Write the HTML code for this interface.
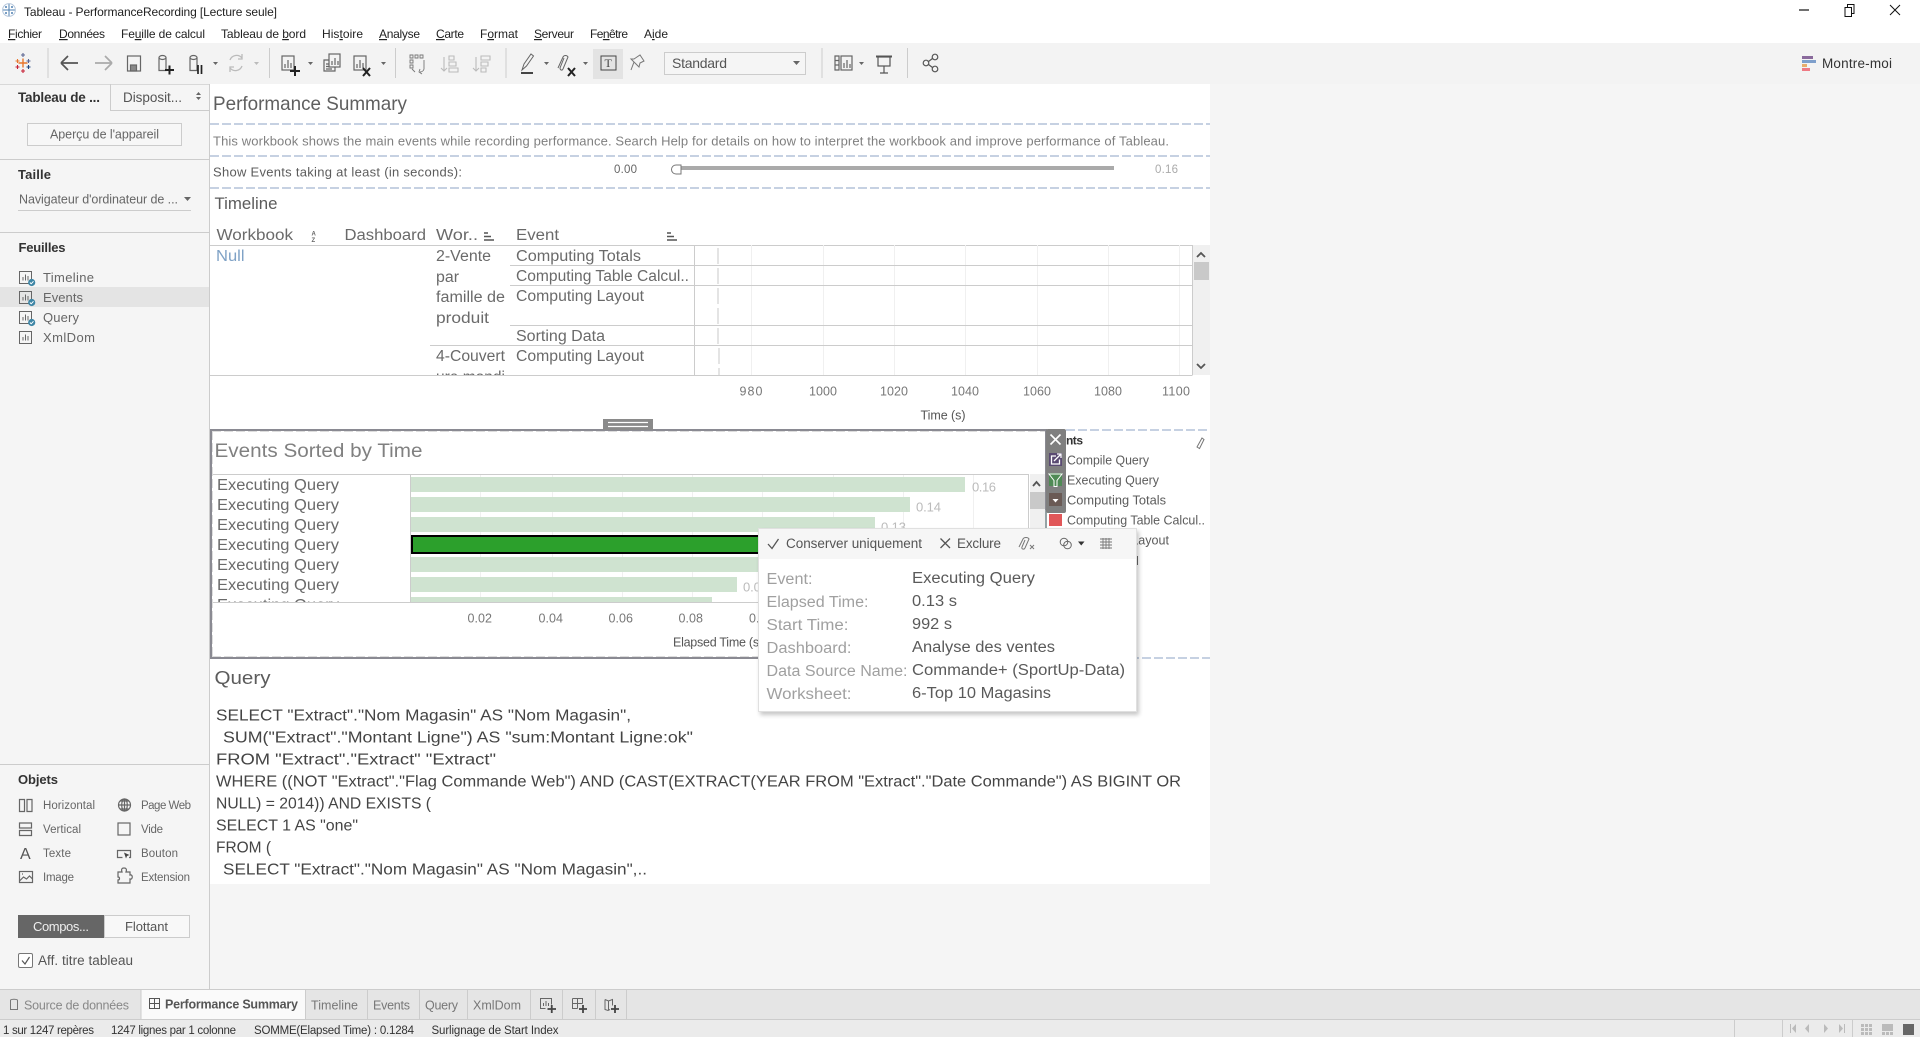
<!DOCTYPE html>
<html lang="fr">
<head>
<meta charset="utf-8">
<title>Tableau - PerformanceRecording [Lecture seule]</title>
<style>
html,body{margin:0;padding:0;width:1920px;height:1037px;overflow:hidden;background:#fff}
svg{display:block;position:absolute;left:0;top:0}
text{font-family:"Liberation Sans",sans-serif;fill:#666;font-size:13px;white-space:pre}
.m{fill:#222;font-size:12px}
.b{font-weight:bold;fill:#333}
.s{font-size:11.5px;fill:#666}
.st{font-size:11.5px;fill:#333}
.r{font-size:15.5px;fill:#6a6a6a}
.ax{font-size:12.5px;fill:#777}
.lb{fill:#bbb;font-size:13px}
.q{font-size:15.5px;fill:#444}
.tk{font-size:15.5px;fill:#a0a0a0}
.tv{font-size:15.5px;fill:#5a5a5a}
.ic{fill:none;stroke:#666;stroke-width:1.2}
.lg{font-size:12.5px;fill:#5c5c5c}
</style>
</head>
<body>
<svg width="1920" height="1037" viewBox="0 0 1920 1037" xmlns="http://www.w3.org/2000/svg">
<defs>
<g id="sheet"><rect x=".5" y=".5" width="12" height="12" fill="none" stroke="#666"/><path d="M4 9.5V6M6.5 9.5V3.5M9 9.5V5" stroke="#666" fill="none"/></g>
<g id="badge"><circle r="3.6" fill="#3d85a5"/><path d="M-1.8 0L-.5 1.3L1.8-1.2" stroke="#fff" fill="none"/></g>
<clipPath id="ctl"><rect x="210" y="245" width="983" height="130"/></clipPath>
<clipPath id="cev"><rect x="212" y="474" width="817" height="128"/></clipPath>
</defs>

<!-- base -->
<rect width="1920" height="1037" fill="#f5f5f5"/>
<rect width="1920" height="43" fill="#fff"/>
<rect y="43" width="1920" height="41" fill="#f3f3f3"/>

<!-- title bar -->
<g transform="translate(9,10)" fill="none" stroke="#4d7fb0" stroke-width="1"><path d="M0-6V6M-6 0H6M-3-4V-2M3-4V-2M-3 2V4M3 2V4M-4-3H-2M2-3H4M-4 3H-2M2 3H4"/><circle r="6.4" stroke="#b7c8dc"/></g>
<text x="24" y="16" textLength="253" style="font-size:12px;fill:#222">Tableau - PerformanceRecording [Lecture seule]</text>
<path d="M1799 10H1809" stroke="#111" stroke-width="1.2"/>
<path d="M1845 7.500h6.500v9h-6.500zM1847.500 7.500v-3h6.500v9h-2" fill="none" stroke="#111"/>
<path d="M1890 5L1900 15M1900 5L1890 15" stroke="#111"/>

<!-- menu -->
<text class="m" x="8" y="38" textLength="34"><tspan text-decoration="underline">F</tspan>ichier</text>
<text class="m" x="59" y="38" textLength="46"><tspan text-decoration="underline">D</tspan>onnées</text>
<text class="m" x="121" y="38" textLength="84">Fe<tspan text-decoration="underline">u</tspan>ille de calcul</text>
<text class="m" x="221" y="38" textLength="85">Tableau de <tspan text-decoration="underline">b</tspan>ord</text>
<text class="m" x="322" y="38" textLength="41">His<tspan text-decoration="underline">t</tspan>oire</text>
<text class="m" x="379" y="38" textLength="41"><tspan text-decoration="underline">A</tspan>nalyse</text>
<text class="m" x="436" y="38" textLength="28"><tspan text-decoration="underline">C</tspan>arte</text>
<text class="m" x="480" y="38" textLength="38">F<tspan text-decoration="underline">o</tspan>rmat</text>
<text class="m" x="534" y="38" textLength="40"><tspan text-decoration="underline">S</tspan>erveur</text>
<text class="m" x="590" y="38" textLength="38">Fe<tspan text-decoration="underline">n</tspan>être</text>
<text class="m" x="644" y="38" textLength="24">A<tspan text-decoration="underline">i</tspan>de</text>

<!-- toolbar -->
<g stroke-width="1.100" fill="none">
<path d="M17.500 59v4M15.500 61h4" stroke="#e8762c"/><path d="M28.500 59v4M26.500 61h4" stroke="#5b6591"/>
<path d="M23 53v4M21 55h4" stroke="#5b6591"/><path d="M23 69v4M21 71h4" stroke="#c72035"/>
<path d="M17.500 65v4M15.500 67h4" stroke="#c72035"/><path d="M28.500 65v4M26.500 67h4" stroke="#1f447e"/>
<path d="M23 58.500v9M18.500 63h9" stroke="#e8762c" stroke-width="1.400"/>
</g>
<g stroke="#ccc"><path d="M48 48V78M269.500 48V78M395.500 48V78M506 48V78M822 48V78M907.500 48V78"/></g>
<path d="M61 63H78M61 63L68 56M61 63L68 70" stroke="#555" stroke-width="1.700" fill="none"/>
<path d="M95 63H112M112 63L105 56M112 63L105 70" stroke="#aaa" stroke-width="1.700" fill="none"/>
<g class="ic"><rect x="127.500" y="56" width="13" height="15"/><rect x="130.500" y="65" width="6" height="6" fill="#888"/></g>
<g class="ic"><path d="M159 57.500a3.500 2 0 0 1 7 0v13h-7z"/><path d="M159 57.500a3.500 2 0 0 0 7 0"/></g>
<path d="M165 70H174M169.500 65.500V74.500" stroke="#222" stroke-width="2"/>
<g class="ic"><path d="M190 57.500a3.500 2 0 0 1 7 0v13h-7z"/><path d="M190 57.500a3.500 2 0 0 0 7 0"/></g>
<path d="M198 65v9M201.500 65v9" stroke="#222" stroke-width="1.700"/>
<path d="M213 62h5l-2.500 3z" fill="#666"/>
<path d="M230 60a7 7 0 0 1 12-2M242 66a7 7 0 0 1-12 2M242 54v5h-4M230 72v-5h4" stroke="#bbb" stroke-width="1.300" fill="none"/>
<path d="M254 62h5l-2.500 3z" fill="#bbb"/>
<g class="ic"><rect x="282" y="56" width="12" height="14"/><path d="M285 68v-4M288 68v-8M291 68v-5"/></g>
<path d="M290 71H300M295 66V76" stroke="#222" stroke-width="2"/>
<path d="M308 62h5l-2.500 3z" fill="#666"/>
<g class="ic"><rect x="329" y="54" width="11" height="13" fill="#f3f3f3"/><path d="M332 65v-4M335 65v-7M338 65v-4"/><path d="M329 60h-5v11h11v-4M326 64h3M326 66.500h3M326 69h6"/></g>
<g class="ic"><rect x="354" y="56" width="12" height="14"/><path d="M357 68v-4M360 68v-8M363 68v-5"/></g>
<path d="M363 68L370 76M370 68L363 76" stroke="#222" stroke-width="2"/>
<path d="M381 62h5l-2.500 3z" fill="#666"/>
<g fill="none" stroke="#777" stroke-width=".9"><path d="M410 55h3v3h-3zM415 55h3v3h-3zM420 55h3v3h-3zM410 60h3v3h-3zM410 65h3v3h-3zM424 60v9a4 4 0 0 1-4 3M420 69l-1 3 3 2M415 72l-3-3"/></g>
<g fill="none" stroke="#bbb" stroke-width="1.100"><path d="M444 57v14M441 68l3 3 3-3M449 56h5v4h-5zM449 62h7v4h-7zM449 68h9v4h-9z"/></g>
<g fill="none" stroke="#bbb" stroke-width="1.100"><path d="M476 57v14M473 68l3 3 3-3M481 56h9v4h-9zM481 62h7v4h-7zM481 68h5v4h-5z"/></g>
<path d="M522 70l2-6 7-10 2.500 2-7 10z" fill="none" stroke="#666"/><path d="M521 73H533" stroke="#444" stroke-width="2"/>
<path d="M544 62h5l-2.500 3z" fill="#666"/>
<path d="M558 68l5-11c1-2 4-2 5 0l-5 12c-1 2-3 1-3-1l4-10" fill="none" stroke="#666"/>
<path d="M568 68L575 76M575 68L568 76" stroke="#222" stroke-width="2"/>
<path d="M583 62h5l-2.500 3z" fill="#666"/>
<rect x="593" y="49" width="30" height="30" fill="#e3e3e3"/>
<rect x="601" y="56" width="15" height="14" fill="none" stroke="#444"/>
<text x="604.500" y="67" style="font-family:'Liberation Serif',serif;font-size:12px;fill:#444">T</text>
<path d="M634 59l6-4 4 6-4 2-1 4-5-5-3 8 3-8-3-3z" fill="none" stroke="#777"/>
<rect x="664.500" y="52.500" width="141" height="22" fill="#f5f5f5" stroke="#ccc"/>
<text x="672" y="68" textLength="55" style="font-size:14px;fill:#555">Standard</text>
<path d="M793 61h7l-3.500 4z" fill="#666"/>
<g class="ic"><path d="M835 56h4v14h-4zM835 60.500h4M835 65h4"/><rect x="841" y="56" width="11" height="14"/><path d="M844 68v-5M847 68v-8M850 68v-4"/></g>
<path d="M859 62h5l-2.500 3z" fill="#666"/>
<g fill="none" stroke="#555" stroke-width="1.200"><path d="M876 56.500H892" stroke-width="2"/><rect x="878" y="57" width="12" height="9"/><path d="M884 66V73M880 73H888"/></g>
<g fill="none" stroke="#555" stroke-width="1.200"><circle cx="926" cy="63" r="2.800"/><circle cx="935" cy="57" r="2.800"/><circle cx="935" cy="69" r="2.800"/><path d="M928.500 61.500L932.500 58.500M928.500 64.500L932.500 67.500"/></g>
<!-- montre-moi -->
<rect x="1802" y="56" width="11" height="3" fill="#8a6a9c"/><rect x="1802" y="60" width="14" height="3" fill="#7e9fcb"/><rect x="1802" y="64" width="5" height="3" fill="#e8ad6c"/><rect x="1802" y="68" width="8" height="3" fill="#ef7a84"/>
<text x="1822" y="68" textLength="70" style="font-size:13.500px;fill:#333">Montre-moi</text>

<!-- left panel -->
<rect x="0" y="84" width="209" height="905" fill="#f5f5f5"/>
<rect x="209" y="84" width="1" height="905" fill="#ccc"/>
<path d="M0 84.500H209" stroke="#d8d8d8"/>
<path d="M110.500 84V110.500H209" stroke="#ccc" fill="none"/>
<text class="b" x="18" y="102" textLength="82" style="font-size:13.500px">Tableau de ...</text>
<text x="123" y="102" textLength="59" style="font-size:13.500px;fill:#555">Disposit...</text>
<path d="M196 95L198.500 92L201 95zM196 97L198.500 100L201 97z" fill="#666"/>
<rect x="27.500" y="123.500" width="154" height="22" fill="#f7f7f7" stroke="#ccc"/>
<text x="50" y="138.500" textLength="109" style="font-size:12.500px;fill:#666">Aperçu de l'appareil</text>
<rect x="0" y="159" width="209" height="1" fill="#ccc"/>
<text class="b" x="18" y="179" textLength="33">Taille</text>
<text x="19" y="203.500" textLength="159" style="font-size:12.500px;fill:#666">Navigateur d'ordinateur de ...</text>
<path d="M184 197h7l-3.500 4z" fill="#666"/>
<rect x="18" y="210" width="173" height="1" fill="#ccc"/>
<rect x="0" y="232" width="209" height="1" fill="#ccc"/>
<text class="b" x="18.500" y="252" textLength="47">Feuilles</text>
<rect x="0" y="287" width="209" height="20" fill="#e4e4e4"/>
<use href="#sheet" x="19" y="271"/><use href="#badge" x="31.700" y="282.500"/>
<use href="#sheet" x="19" y="291"/><use href="#badge" x="31.700" y="302.500"/>
<use href="#sheet" x="19" y="311"/><use href="#badge" x="31.700" y="322.500"/>
<use href="#sheet" x="19" y="331"/>
<text x="43" y="282" textLength="51">Timeline</text>
<text x="43" y="302" textLength="40">Events</text>
<text x="43" y="322" textLength="36">Query</text>
<text x="43" y="342" textLength="52">XmlDom</text>
<rect x="0" y="764" width="209" height="1" fill="#ccc"/>
<text class="b" x="18" y="784" textLength="40">Objets</text>
<text class="s" x="43" y="809" textLength="52">Horizontal</text>
<text class="s" x="43" y="833" textLength="38">Vertical</text>
<text class="s" x="43" y="857" textLength="28">Texte</text>
<text class="s" x="43" y="881" textLength="31">Image</text>
<text class="s" x="141" y="809" textLength="50">Page Web</text>
<text class="s" x="141" y="833" textLength="22">Vide</text>
<text class="s" x="141" y="857" textLength="37">Bouton</text>
<text class="s" x="141" y="881" textLength="49">Extension</text>
<g class="ic">
<path d="M19.500 799.500h5v12h-5zM27 799.500h5v12h-5z"/>
<path d="M19.500 823h12v5h-12zM19.500 830.500h12v5h-12z"/>
<circle cx="124.500" cy="805" r="6"/><path d="M118.500 805h12M124.500 799v12M120 801h9M120 809h9"/><ellipse cx="124.500" cy="805" rx="2.800" ry="6"/>
<rect x="118" y="823" width="12" height="12"/>
<path d="M122.500 857.500h-5v-7h13v7h-1.500"/>
<rect x="19.500" y="871.500" width="13" height="11"/><path d="M19.500 881l4-4 3 2 3-3 3 3M22 874h1"/>
<path d="M118 872h4c-1-3 0-4 2-4s3 1 2 4h4v3c3-1 3 5 0 4v4h-12v-3c2 0 2-3 0-3z"/>
</g>
<path d="M124 852.500l2 6 1-2.500 2.500-1z" fill="#444"/>
<text x="20" y="859" style="font-size:16px;fill:#555">A</text>
<rect x="18" y="915" width="86" height="23" fill="#666"/>
<rect x="104.500" y="915.500" width="85" height="22" fill="#f8f8f8" stroke="#ccc"/>
<text x="33" y="931" textLength="56" style="fill:#eee">Compos...</text>
<text x="125" y="931" textLength="43" style="fill:#555">Flottant</text>
<rect x="18.500" y="953.500" width="14" height="14" rx="1.500" fill="#fff" stroke="#777"/>
<path d="M22 960.500L25 964L29.500 957" fill="none" stroke="#555" stroke-width="1.200"/>
<text x="38" y="965" textLength="95" style="font-size:13.500px;fill:#555">Aff. titre tableau</text>

<!-- dashboard -->
<rect x="210" y="84" width="1000" height="800" fill="#fff"/>
<text x="213" y="110" textLength="194" lengthAdjust="spacingAndGlyphs" style="font-size:19.500px;fill:#5f5f5f">Performance Summary</text>
<g stroke="#c6d1e2" stroke-width="2" stroke-dasharray="9 3">
<path d="M210 124H1210"/><path d="M210 156H1210"/><path d="M210 188H1210"/>
<path d="M1066 430H1210"/><path d="M1046 658H1210"/>
</g>
<text x="213" y="145.500" textLength="956" style="font-size:13px;fill:#808080">This workbook shows the main events while recording performance. Search Help for details on how to interpret the workbook and improve performance of Tableau.</text>
<text x="213" y="176.500" textLength="249" style="font-size:13px;fill:#5c5c5c">Show Events taking at least (in seconds):</text>
<text x="614" y="173" textLength="23" style="font-size:11.500px;fill:#666">0.00</text>
<rect x="678" y="166" width="436" height="4" fill="#aaa"/>
<path d="M676 165h5v9h-5a4.500 4.500 0 0 1 0-9z" fill="#fff" stroke="#777"/>
<text x="1155" y="173" textLength="23" style="font-size:11.500px;fill:#aaa">0.16</text>

<text x="214.500" y="209" textLength="63" lengthAdjust="spacingAndGlyphs" style="font-size:16.500px;fill:#5c5c5c">Timeline</text>
<text class="r" x="216.500" y="240" textLength="76.500" lengthAdjust="spacingAndGlyphs">Workbook</text>
<text class="r" x="344.500" y="240" textLength="81.500" lengthAdjust="spacingAndGlyphs">Dashboard</text>
<text class="r" x="436" y="240" textLength="42" lengthAdjust="spacingAndGlyphs">Wor..</text>
<text class="r" x="516" y="240" textLength="43" lengthAdjust="spacingAndGlyphs">Event</text>
<text x="311.500" y="235.500" style="font-size:6px;font-weight:bold;fill:#666">A</text>
<text x="311.500" y="242" style="font-size:6px;font-weight:bold;fill:#666">Z</text>
<g stroke="#555" fill="none"><path d="M484 233h4M484 236.500h7M484 240h10M667 233h4M667 236.500h7M667 240h10" stroke-width="1.500"/></g>
<path d="M210 245.500H1192.500" stroke="#ccc"/>
<g stroke="#f0f0f0"><path d="M751.500 245V375M823.500 245V375M894.500 245V375M965.500 245V375M1037.500 245V375M1108.500 245V375M1179.500 245V375"/></g>
<g stroke="#e4e4e4" stroke-width="2"><path d="M718 248V264M718 268V284M718 288V304M718 308V324M718 328V344M719 348V364M719 368V375"/></g>
<g stroke="#ccc"><path d="M510 265.500H1192M510 285.500H1192M510 325.500H1192M430 345.500H1192M694.500 245V375M1192.500 245V375M210 375.500H1192.500"/></g>
<g clip-path="url(#ctl)">
<text class="r" x="216" y="261" textLength="28.500" lengthAdjust="spacingAndGlyphs" style="fill:#7fa2c6">Null</text>
<text class="r" x="436" y="261" textLength="55" lengthAdjust="spacingAndGlyphs">2-Vente</text>
<text class="r" x="436" y="282" textLength="23" lengthAdjust="spacingAndGlyphs">par</text>
<text class="r" x="436" y="302" textLength="69" lengthAdjust="spacingAndGlyphs">famille de</text>
<text class="r" x="436" y="323" textLength="53" lengthAdjust="spacingAndGlyphs">produit</text>
<text class="r" x="436" y="361" textLength="69" lengthAdjust="spacingAndGlyphs">4-Couvert</text>
<text class="r" x="436" y="382" textLength="69" lengthAdjust="spacingAndGlyphs">ure mondi</text>
<text class="r" x="516" y="261" textLength="125" lengthAdjust="spacingAndGlyphs">Computing Totals</text>
<text class="r" x="516" y="281" textLength="173" lengthAdjust="spacingAndGlyphs">Computing Table Calcul..</text>
<text class="r" x="516" y="301" textLength="128" lengthAdjust="spacingAndGlyphs">Computing Layout</text>
<text class="r" x="516" y="341" textLength="89" lengthAdjust="spacingAndGlyphs">Sorting Data</text>
<text class="r" x="516" y="361" textLength="128" lengthAdjust="spacingAndGlyphs">Computing Layout</text>
</g>
<rect x="1193" y="245" width="17" height="130" fill="#f0f0f0"/>
<rect x="1194" y="262" width="15" height="18" fill="#c9c9c9"/>
<path d="M1197 257L1201 253L1205 257M1197 364L1201 368L1205 364" fill="none" stroke="#555" stroke-width="1.800"/>
<text class="ax" x="739.500" y="395.500" textLength="23">980</text>
<text class="ax" x="809" y="395.500" textLength="28">1000</text>
<text class="ax" x="880" y="395.500" textLength="28">1020</text>
<text class="ax" x="951" y="395.500" textLength="28">1040</text>
<text class="ax" x="1023" y="395.500" textLength="28">1060</text>
<text class="ax" x="1094" y="395.500" textLength="28">1080</text>
<text class="ax" x="1162" y="395.500" textLength="28">1100</text>
<text x="920.500" y="419.500" textLength="45" style="font-size:12.500px;fill:#555">Time (s)</text>

<!-- events sorted -->
<text x="214.500" y="457" textLength="208" lengthAdjust="spacingAndGlyphs" style="font-size:19.500px;fill:#808080">Events Sorted by Time</text>
<g stroke="#f0f0f0"><path d="M480.500 474V602M552.500 474V602M622.500 474V602M692.500 474V602M762.500 474V602M833.500 474V602M903.500 474V602M973.500 474V602"/></g>
<g clip-path="url(#cev)" fill="#cfe3d0">
<rect x="411" y="477" width="554" height="15"/>
<rect x="411" y="497" width="499" height="15"/>
<rect x="411" y="517" width="464" height="15"/>
<rect x="411" y="557" width="440" height="15"/>
<rect x="411" y="577" width="326" height="15"/>
<rect x="411" y="597" width="301" height="15"/>
<rect x="412" y="536" width="440" height="17" fill="#2ca02c" stroke="#000" stroke-width="2"/>
<text class="r" x="217" y="490" textLength="122" lengthAdjust="spacingAndGlyphs">Executing Query</text>
<text class="r" x="217" y="510" textLength="122" lengthAdjust="spacingAndGlyphs">Executing Query</text>
<text class="r" x="217" y="530" textLength="122" lengthAdjust="spacingAndGlyphs">Executing Query</text>
<text class="r" x="217" y="550" textLength="122" lengthAdjust="spacingAndGlyphs">Executing Query</text>
<text class="r" x="217" y="570" textLength="122" lengthAdjust="spacingAndGlyphs">Executing Query</text>
<text class="r" x="217" y="590" textLength="122" lengthAdjust="spacingAndGlyphs">Executing Query</text>
<text class="r" x="217" y="610" textLength="122" lengthAdjust="spacingAndGlyphs">Executing Query</text>
<text class="lb" x="972" y="491.500" textLength="24">0.16</text>
<text class="lb" x="916" y="511.500" textLength="25">0.14</text>
<text class="lb" x="881" y="531.500" textLength="25">0.13</text>
<text class="lb" x="743" y="591.500" textLength="25">0.09</text>
</g>
<path d="M212 474.500H1028.500V602.500M410.500 474V602M212 602.500H1028.500" fill="none" stroke="#ccc"/>
<rect x="1030" y="474" width="15" height="128" fill="#f0f0f0"/>
<rect x="1030" y="492" width="15" height="17" fill="#c9c9c9"/>
<path d="M1033 486L1036.500 482L1040 486" fill="none" stroke="#555" stroke-width="1.800"/>
<text class="ax" x="467.500" y="622.500" textLength="24.500">0.02</text>
<text class="ax" x="538.500" y="622.500" textLength="24.500">0.04</text>
<text class="ax" x="608.500" y="622.500" textLength="24.500">0.06</text>
<text class="ax" x="678.500" y="622.500" textLength="24.500">0.08</text>
<text class="ax" x="749" y="622.500" textLength="24.500">0.10</text>
<text x="673" y="646.500" textLength="90" style="font-size:12.500px;fill:#555">Elapsed Time (s)</text>
<!-- container outline -->
<rect x="211" y="430" width="835" height="228" fill="none" stroke="#8a8a92" stroke-width="2"/>
<path d="M212 431.500H1045M212 656.500H1045M212.500 431V657" fill="none" stroke="#ddd" stroke-dasharray="9 3"/>
<rect x="603" y="419" width="50" height="11" fill="#8a8a8a"/>
<path d="M608 422.500H648M608 426.500H648" stroke="#fff" stroke-width="1.300"/>

<!-- legend -->
<text class="b" x="1046" y="444.500" textLength="37" style="font-size:12px">Events</text>
<path d="M1197 447l5-9 2 1.500-4.500 9z" fill="none" stroke="#777"/>
<text class="lg" x="1067" y="464.500" textLength="82" lengthAdjust="spacingAndGlyphs">Compile Query</text>
<text class="lg" x="1067" y="484.500" textLength="92" lengthAdjust="spacingAndGlyphs">Executing Query</text>
<text class="lg" x="1067" y="504.500" textLength="99" lengthAdjust="spacingAndGlyphs">Computing Totals</text>
<text class="lg" x="1067" y="524.500" textLength="138" lengthAdjust="spacingAndGlyphs">Computing Table Calcul..</text>
<text class="lg" x="1067" y="544.500" textLength="102" lengthAdjust="spacingAndGlyphs">Computing Layout</text>
<rect x="1049" y="514" width="13" height="12" fill="#e15759"/>
<path d="M1137.500 556V565" stroke="#666"/>
<path d="M1046 510V535" stroke="#9aa" stroke-width="1.500"/>
<!-- floating toolbar -->
<rect x="1046" y="429" width="20" height="84" rx="2" fill="#7f7f7f"/>
<path d="M1050.500 434.500L1060.500 444.500M1060.500 434.500L1050.500 444.500" stroke="#fff" stroke-width="1.600"/>
<rect x="1049" y="453" width="13" height="13" fill="#5a4a72"/>
<path d="M1056 456h-4.500v8h8v-4.500M1054 461L1060.500 454.500M1057 454h4v4" fill="none" stroke="#fff" stroke-width="1.300"/>
<rect x="1049" y="473" width="13" height="13" fill="#4f8a55"/>
<path d="M1049 474h13L1057 480.500v6h-3v-6z" fill="#4f8a55" stroke="#fff"/>
<rect x="1049" y="493" width="13" height="13" fill="#6a5a55"/>
<path d="M1052.500 499h6L1055.500 502.500z" fill="#fff"/>

<!-- query -->
<text x="214.500" y="684" textLength="56" lengthAdjust="spacingAndGlyphs" style="font-size:18.500px;fill:#5c5c5c">Query</text>
<text class="q" x="216" y="720.500" textLength="415" lengthAdjust="spacingAndGlyphs">SELECT "Extract"."Nom Magasin" AS "Nom Magasin",</text>
<text class="q" x="223" y="742.500" textLength="470" lengthAdjust="spacingAndGlyphs">SUM("Extract"."Montant Ligne") AS "sum:Montant Ligne:ok"</text>
<text class="q" x="216" y="764.500" textLength="280" lengthAdjust="spacingAndGlyphs">FROM "Extract"."Extract" "Extract"</text>
<text class="q" x="216" y="786.500" textLength="965" lengthAdjust="spacingAndGlyphs">WHERE ((NOT "Extract"."Flag Commande Web") AND (CAST(EXTRACT(YEAR FROM "Extract"."Date Commande") AS BIGINT OR</text>
<text class="q" x="216" y="808.500" textLength="215" lengthAdjust="spacingAndGlyphs">NULL) = 2014)) AND EXISTS (</text>
<text class="q" x="216" y="830.500" textLength="142" lengthAdjust="spacingAndGlyphs">SELECT 1 AS "one"</text>
<text class="q" x="216" y="852.500" textLength="55" lengthAdjust="spacingAndGlyphs">FROM (</text>
<text class="q" x="223" y="874.500" textLength="424" lengthAdjust="spacingAndGlyphs">SELECT "Extract"."Nom Magasin" AS "Nom Magasin",..</text>

<!-- tooltip -->
<rect x="760" y="531" width="379" height="184" fill="#000" opacity=".22" style="filter:blur(2px)"/>
<rect x="758.500" y="528.500" width="378" height="183" fill="#fff" stroke="#e0e0e0"/>
<rect x="759" y="529" width="377" height="30" fill="#f6f6f6"/>
<path d="M768 544L772 548.500L778.500 539" fill="none" stroke="#555" stroke-width="1.300"/>
<text x="786" y="548" textLength="136" style="font-size:13.500px;fill:#555">Conserver uniquement</text>
<path d="M940.500 538.500L950 548M950 538.500L940.500 548" stroke="#555" stroke-width="1.300"/>
<text x="957" y="548" textLength="44" style="font-size:13.500px;fill:#555">Exclure</text>
<path d="M1019 547l4-8c1-2 5-2 6 0l-4 9c-1 2-4 1-3-1l3-7" fill="none" stroke="#777"/>
<path d="M1030 545L1034 549M1034 545L1030 549" stroke="#777"/>
<circle cx="1064" cy="542" r="3.800" fill="none" stroke="#666"/><circle cx="1067.500" cy="545" r="3.800" fill="none" stroke="#666"/>
<path d="M1078 541.500h6.500l-3.250 4z" fill="#333"/>
<path d="M1100 539h12M1100 542h12M1100 545h12M1100 548h12M1103 538v11M1106 538v11M1109 538v11" stroke="#777" fill="none" stroke-width=".9"/>
<text class="tk" x="766.500" y="584" textLength="46" lengthAdjust="spacingAndGlyphs">Event:</text>
<text class="tk" x="766.500" y="607" textLength="102" lengthAdjust="spacingAndGlyphs">Elapsed Time:</text>
<text class="tk" x="766.500" y="630" textLength="82" lengthAdjust="spacingAndGlyphs">Start Time:</text>
<text class="tk" x="766.500" y="653" textLength="85" lengthAdjust="spacingAndGlyphs">Dashboard:</text>
<text class="tk" x="766.500" y="676" textLength="141" lengthAdjust="spacingAndGlyphs">Data Source Name:</text>
<text class="tk" x="766.500" y="699" textLength="85" lengthAdjust="spacingAndGlyphs">Worksheet:</text>
<text class="tv" x="912" y="583" textLength="123" lengthAdjust="spacingAndGlyphs">Executing Query</text>
<text class="tv" x="912" y="606" textLength="45" lengthAdjust="spacingAndGlyphs">0.13 s</text>
<text class="tv" x="912" y="629" textLength="40" lengthAdjust="spacingAndGlyphs">992 s</text>
<text class="tv" x="912" y="652" textLength="143" lengthAdjust="spacingAndGlyphs">Analyse des ventes</text>
<text class="tv" x="912" y="675" textLength="213" lengthAdjust="spacingAndGlyphs">Commande+ (SportUp-Data)</text>
<text class="tv" x="912" y="698" textLength="139" lengthAdjust="spacingAndGlyphs">6-Top 10 Magasins</text>

<!-- sheet tabs -->
<rect x="0" y="989" width="1920" height="30" fill="#e5e5e5"/>
<rect x="0" y="989" width="1920" height="1" fill="#ccc"/>
<rect x="141" y="990" width="164" height="29" fill="#fafafa"/>
<g stroke="#ccc"><path d="M305.500 990V1019M367.500 990V1019M419.500 990V1019M467.500 990V1019M530.500 990V1019M562.500 990V1019M595.500 990V1019M626.500 990V1019M141 990V1019"/></g>
<path d="M10.500 1000a4 1.500 0 0 1 7 0v9.500h-7z" fill="none" stroke="#777"/>
<text x="24" y="1009.500" textLength="105" style="font-size:12.500px;fill:#888">Source de données</text>
<path d="M149.500 998.500h10v10h-10zM154.500 998.500v10M149.500 1003.500h10" fill="none" stroke="#555"/>
<text x="165" y="1008.500" textLength="133" style="font-size:12.500px;font-weight:bold;fill:#555">Performance Summary</text>
<text x="311" y="1009.500" textLength="47" style="font-size:12.500px;fill:#777">Timeline</text>
<text x="373" y="1009.500" textLength="37" style="font-size:12.500px;fill:#777">Events</text>
<text x="425" y="1009.500" textLength="33" style="font-size:12.500px;fill:#777">Query</text>
<text x="473" y="1009.500" textLength="48" style="font-size:12.500px;fill:#777">XmlDom</text>
<g fill="none" stroke="#666"><path d="M540.500 1009v-10.500h11v6M543.500 1006v-3M546 1006v-5M548.500 1006v-3M540.500 1008.500h5"/><path d="M572.500 998.500h10v5M572.500 998.500v10h5M577.500 998.500v10M572.500 1003.500h10"/><path d="M605 999.500l3.500 1.500 4-1.500v6M605 999.500v10l3 1 2-1M608.500 1001v9"/></g>
<path d="M547.500 1009H556M551.750 1005V1013M579 1009H587M583 1005V1013M611 1009H619M615 1005V1013" stroke="#444" stroke-width="1.800"/>

<!-- status bar -->
<rect x="0" y="1019" width="1920" height="18" fill="#ebebeb"/>
<rect x="0" y="1019" width="1920" height="1" fill="#ccc"/>
<text class="st" x="3" y="1034" textLength="91">1 sur 1247 repères</text>
<text class="st" x="111" y="1034" textLength="125">1247 lignes par 1 colonne</text>
<text class="st" x="254" y="1034" textLength="160">SOMME(Elapsed Time) : 0.1284</text>
<text class="st" x="431.500" y="1034" textLength="127">Surlignage de Start Index</text>
<g stroke="#ccc"><path d="M1734.500 1020V1037M1782.500 1020V1037M1852.500 1020V1037"/></g>
<g fill="#bbb">
<rect x="1790" y="1024" width="1" height="9"/><path d="M1792 1028.500l4-4.500v9zM1805 1028.500l4-4.500v9zM1828 1028.500l-4-4.500v9zM1843 1028.500l-4-4.500v9z"/><rect x="1844" y="1024" width="1" height="9"/>
<rect x="1861" y="1024" width="3" height="3"/><rect x="1865" y="1024" width="3" height="3"/><rect x="1869" y="1024" width="3" height="3"/>
<rect x="1861" y="1028" width="3" height="3"/><rect x="1865" y="1028" width="3" height="3"/><rect x="1869" y="1028" width="3" height="3"/>
<rect x="1861" y="1032" width="3" height="3"/><rect x="1865" y="1032" width="3" height="3"/><rect x="1869" y="1032" width="3" height="3"/>
<rect x="1882" y="1024" width="11" height="7"/><rect x="1882" y="1032" width="3" height="3"/><rect x="1886" y="1032" width="3" height="3"/><rect x="1890" y="1032" width="3" height="3"/>
</g>
<rect x="1903" y="1024" width="11" height="11" fill="#666"/>
</svg>
</body>
</html>
